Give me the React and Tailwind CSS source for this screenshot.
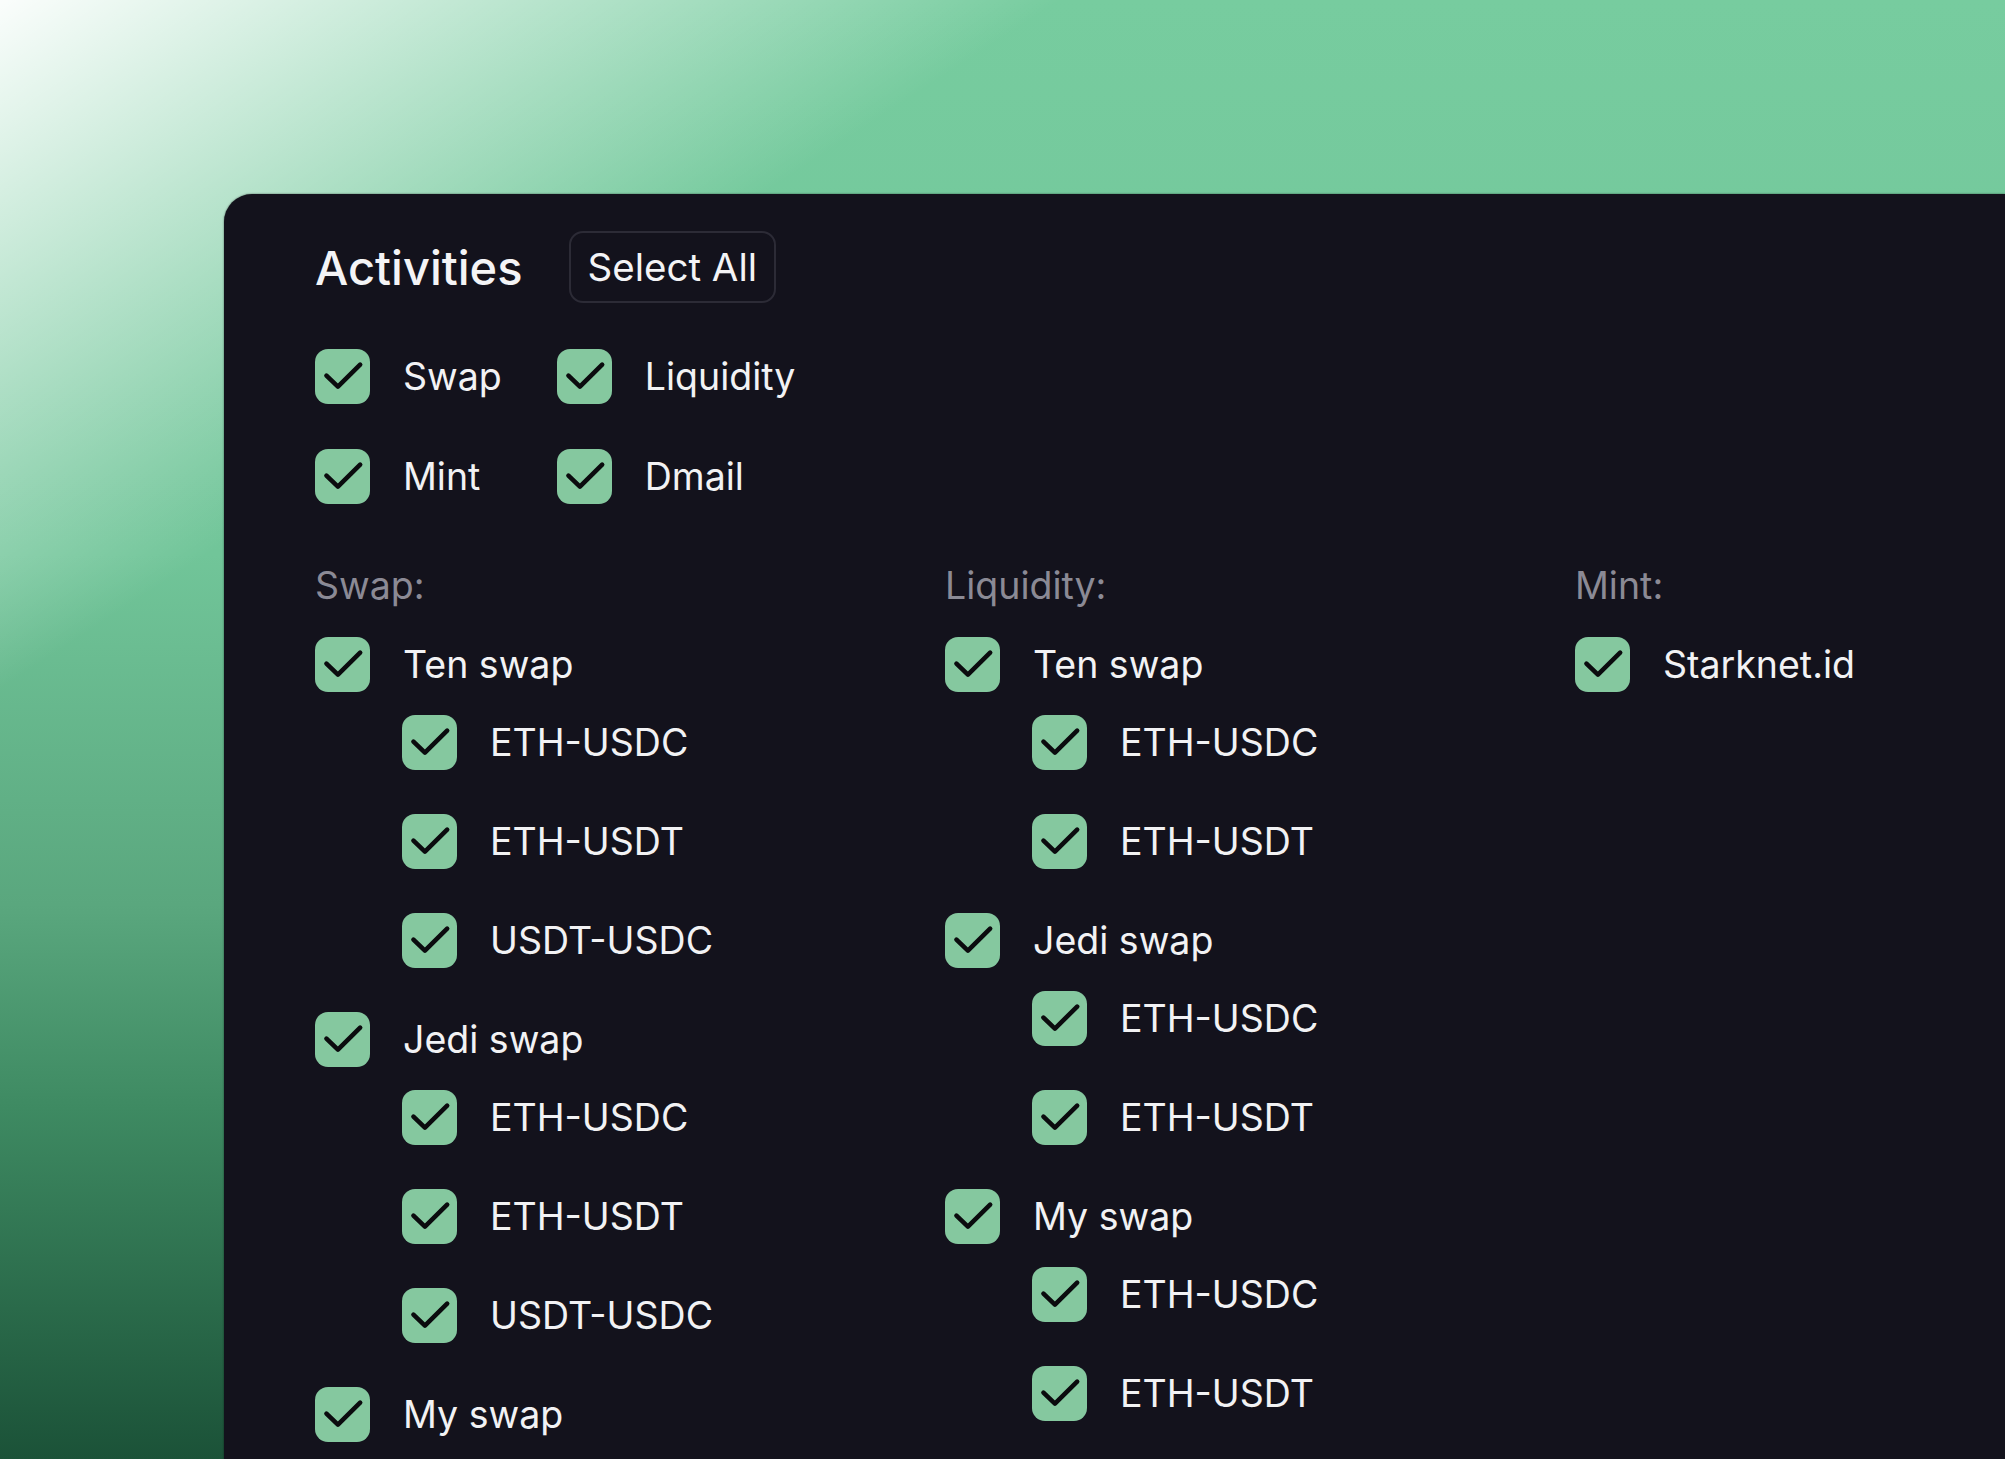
import React from "react";

function Check() {
  return (
    <span className="flex h-[55px] w-[55px] shrink-0 items-center justify-center rounded-[13px] bg-[#85c89f]">
      <svg viewBox="0 0 24 24" className="h-[55px] w-[55px]" fill="none" stroke="#0b0b0e" strokeWidth="2" strokeLinecap="round" strokeLinejoin="round">
        <path d="M5 11.6 L10 16.4 L19.7 6.8" />
      </svg>
    </span>
  );
}

function Item({ label }) {
  return (
    <div className="flex h-[55px] items-center">
      <Check />
      <span className="ml-[33px] whitespace-nowrap text-[37.5px] leading-none text-[#f2f2f4]">{label}</span>
    </div>
  );
}

function Group({ name, items }) {
  return (
    <div className="flex flex-col">
      <Item label={name} />
      {items.length > 0 && (
        <div className="mt-[23px] flex flex-col gap-[44px] pl-[87px]">
          {items.map((c, i) => (
            <Item key={i} label={c} />
          ))}
        </div>
      )}
    </div>
  );
}

const swapGroups = [
  { name: "Ten swap", items: ["ETH-USDC", "ETH-USDT", "USDT-USDC"] },
  { name: "Jedi swap", items: ["ETH-USDC", "ETH-USDT", "USDT-USDC"] },
  { name: "My swap", items: [] },
];

const liqGroups = [
  { name: "Ten swap", items: ["ETH-USDC", "ETH-USDT"] },
  { name: "Jedi swap", items: ["ETH-USDC", "ETH-USDT"] },
  { name: "My swap", items: ["ETH-USDC", "ETH-USDT"] },
];

function Column({ title, groups, children }) {
  return (
    <div className="flex flex-col">
      <div className="text-[37.5px] leading-[45px] text-[#8b8a95]">{title}</div>
      <div className="mt-[29px] flex flex-col gap-[44px]">
        {groups && groups.map((g, i) => <Group key={i} name={g.name} items={g.items} />)}
        {children}
      </div>
    </div>
  );
}

export default function App() {
  return (
    <div className="flex h-[1459px] w-[2005px] overflow-hidden bg-[linear-gradient(147deg,rgba(255,255,255,0.97)_0%,rgba(255,255,255,0)_25%),linear-gradient(to_bottom,#77cc9f_0%,#71c599_38%,#5aa77e_62%,#3e8a62_76%,#1b5238_100%)] font-['Inter','Noto_Sans',sans-serif]">
      <div className="ml-[224px] mt-[194px] flex min-h-[1400px] flex-1 flex-col rounded-tl-[28px] bg-[#13121c] pl-[91px] pt-[37px] shadow-[0_0_2px_rgba(0,0,0,0.6)]">
        <div className="flex items-center">
          <h1 className="text-[47px] font-medium leading-none text-[#f4f4f6]">Activities</h1>
          <button className="ml-[46px] flex h-[72px] items-center rounded-[14px] border-2 border-[#2c2b36] px-[17px] text-[38.5px] leading-none text-[#f4f4f6]">
            Select All
          </button>
        </div>

        <div className="mt-[46px] grid w-fit grid-cols-[auto_auto] gap-x-[55px] gap-y-[45px]">
          <Item label="Swap" />
          <Item label="Liquidity" />
          <Item label="Mint" />
          <Item label="Dmail" />
        </div>

        <div className="mt-[59px] grid grid-cols-[630px_630px_1fr]">
          <Column title="Swap:" groups={swapGroups} />
          <Column title="Liquidity:" groups={liqGroups} />
          <Column title="Mint:">
            <Item label="Starknet.id" />
          </Column>
        </div>
      </div>
    </div>
  );
}
